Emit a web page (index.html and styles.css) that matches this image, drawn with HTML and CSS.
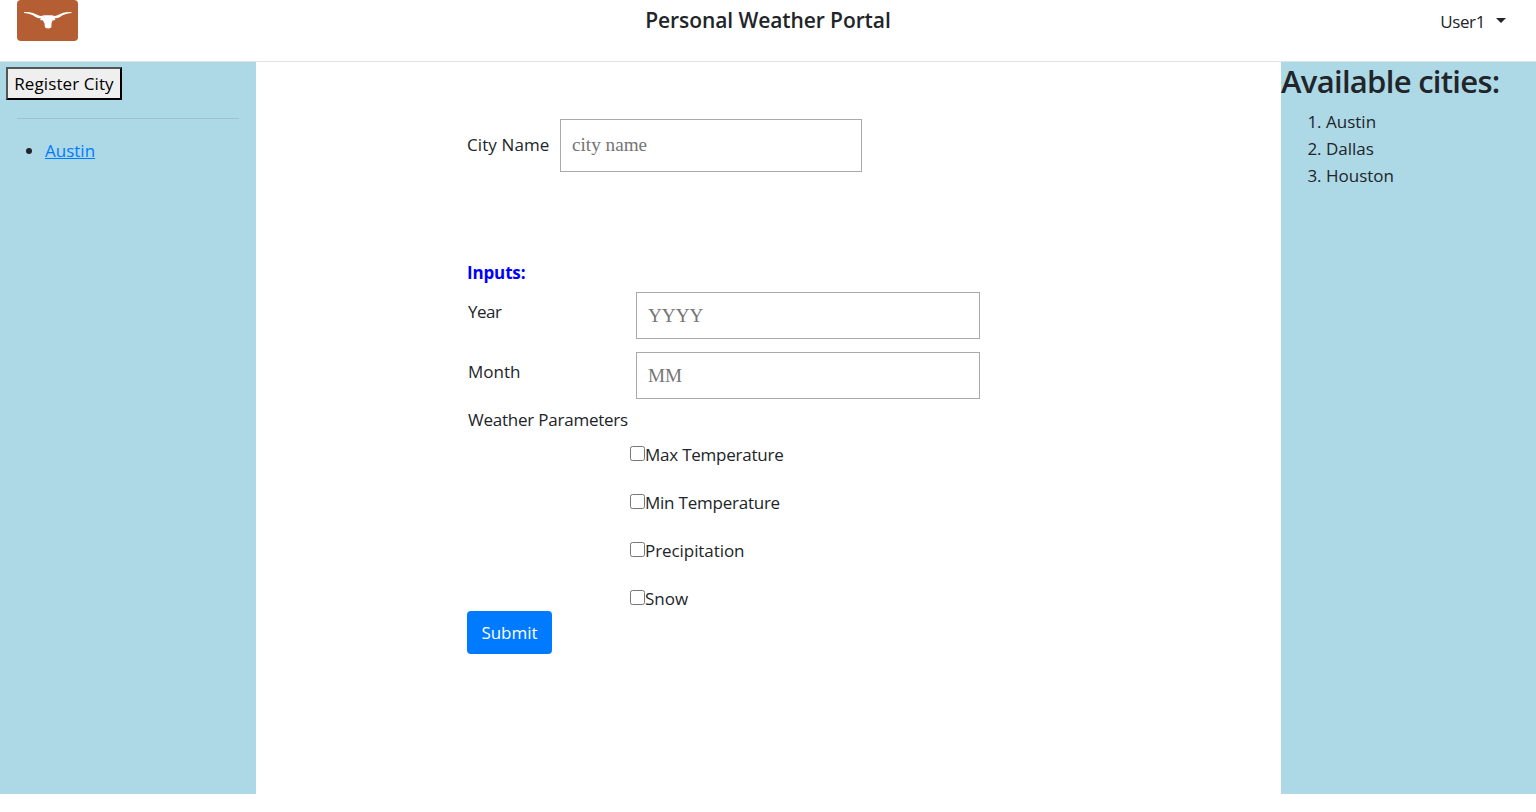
FILE: index.html
```html
<!DOCTYPE html>
<html lang="en">
<head>
<meta charset="utf-8">
<title>Personal Weather Portal</title>
<link rel="stylesheet" href="styles.css">
</head>
<body>
<header class="topbar">
  <svg class="logo" viewBox="0 0 61 41" role="img" aria-label="Longhorn">
    <rect width="61" height="41" rx="4" fill="#b55e33"/>
    <path fill="#fff" d="M7 12C13 11.700 17 13 20 14.800Q23 16.700 27 15.300H35Q38.500 16.700 41.500 14.800C44.500 13 48.500 11.700 54.500 12V13C49.500 13.300 46.500 14.500 43 17Q40.500 18.500 37.500 18.200L38.500 20L35.500 20.500L34.500 23.500L34.300 27.500Q31.300 29.300 28 27.500L27.500 23.500L26 20.500L23 20L24 18.200Q21 18.500 18.500 17C15 14.500 12 13.300 7 13Z"/>
  </svg>
  <h1 class="title">Personal Weather Portal</h1>
  <div class="user"><span class="user-name">User1</span><span class="caret"></span></div>
</header>
<div class="columns">
  <aside class="sidebar">
    <button class="register" type="button">Register City</button>
    <hr class="rule">
    <ul class="my-cities"><li><a href="#">Austin</a></li></ul>
  </aside>
  <main class="content">
    <form class="form">
      <div class="city-row">
        <label class="city-label" for="city">City Name</label>
        <input class="field city-field" id="city" placeholder="city name">
      </div>
      <div class="inputs-title">Inputs:</div>
      <div class="row"><label class="row-label year" for="year">Year</label><input class="field" id="year" placeholder="YYYY"></div>
      <div class="row"><label class="row-label" for="month">Month</label><input class="field" id="month" placeholder="MM"></div>
      <div class="params-title">Weather Parameters</div>
      <div class="params">
        <label class="param"><input type="checkbox"><span class="temperature">Max Temperature</span></label>
        <label class="param"><input type="checkbox"><span class="temperature">Min Temperature</span></label>
        <label class="param"><input type="checkbox"><span class="precipitation">Precipitation</span></label>
        <label class="param"><input type="checkbox"><span>Snow</span></label>
      </div>
      <button class="submit" type="button">Submit</button>
    </form>
  </main>
  <aside class="available">
    <h2 class="available-title">Available cities:</h2>
    <ol class="all-cities"><li>Austin</li><li>Dallas</li><li>Houston</li></ol>
  </aside>
</div>
</body>
</html>
```
FILE: styles.css
```css
* { box-sizing: border-box; }
body {
  margin: 0;
  background: #fff;
  color: #212529;
  font: 17px/27px "Open Sans", "Noto Sans", sans-serif;
}
.topbar {
  display: grid;
  grid-template-columns: 256px 1fr 256px;
  align-items: start;
  height: 62px;
  border-bottom: 1px solid #dee2e6;
}
.logo { display: block; width: 61px; height: 41px; margin-left: 17px; }
.title { margin: 7px 0 0; text-align: center; font-size: 21px; font-weight: 600; line-height: 27px; letter-spacing: -.09px; }
.user { display: flex; justify-content: flex-end; align-items: center; padding: 8px 30px 0 0; gap: 11px; }
.user-name { letter-spacing: -.4px; }
.caret { border: 5px solid transparent; border-top-color: #212529; border-bottom: 0; margin-top: -2px; }
.columns { display: grid; grid-template-columns: 256px 1025px 255px; height: 732px; }
.sidebar, .available { background: #add8e6; }
.sidebar { padding: 5px 17px 0 6px; }
.register {
  display: block;
  width: 116px;
  height: 33px;
  padding: 0;
  border: 2px solid #000;
  border-color: #555 #000 #000 #555;
  background: #efefef;
  color: #000;
  font: inherit;
  letter-spacing: .1px;
  white-space: nowrap;
}
.rule { margin: 18px 0 18px 11px; border: 0; border-top: 1px solid rgba(0, 0, 0, .1); }
.my-cities { margin: 0; padding-left: 39px; }
.my-cities a { color: #007bff; }
.content { padding: 57px 0 0 211px; }
.form { width: 513px; }
.city-row { display: flex; align-items: center; height: 53px; }
.city-label { width: 93px; padding-bottom: 2px; letter-spacing: .1px; }
.field {
  width: 344px;
  height: 47px;
  padding: 1px 11px 0;
  border: 1px solid #a9a9a9;
  border-radius: 0;
  font: 19.2px "Liberation Serif", serif;
}
.field::placeholder { color: #757575; opacity: 1; }
.city-field { width: 302px; height: 53px; padding: 0 11px 1px; }
.inputs-title { margin: 87px 0 6px; color: #00f; font-weight: 700; letter-spacing: -.15px; }
.row { display: flex; height: 60px; }
.row-label { width: 169px; padding: 6px 0 0 1px; }
.year { letter-spacing: -.5px; }
.params-title { padding: 0 0 0 1px; margin-top: -6px; letter-spacing: -.23px; }
.params { display: grid; grid-auto-rows: 48px; padding: 8px 0 0 163px; height: 178px; }
.param { display: flex; align-items: flex-start; }
.param input { width: 15px; height: 15px; margin: 5px 0 0; flex: none; }
.temperature { letter-spacing: -.23px; }
.precipitation { letter-spacing: -.07px; }
.submit {
  display: block;
  width: 85px;
  height: 43px;
  border: 0;
  border-radius: 4px;
  padding: 0;
  background: #007bff;
  color: #fff;
  font: inherit;
}
.available-title { margin: 0; font-size: 31px; font-weight: 600; line-height: 39px; letter-spacing: -.7px; white-space: nowrap; }
.all-cities { margin: 7px 0 0; padding-left: 45px; }
```
